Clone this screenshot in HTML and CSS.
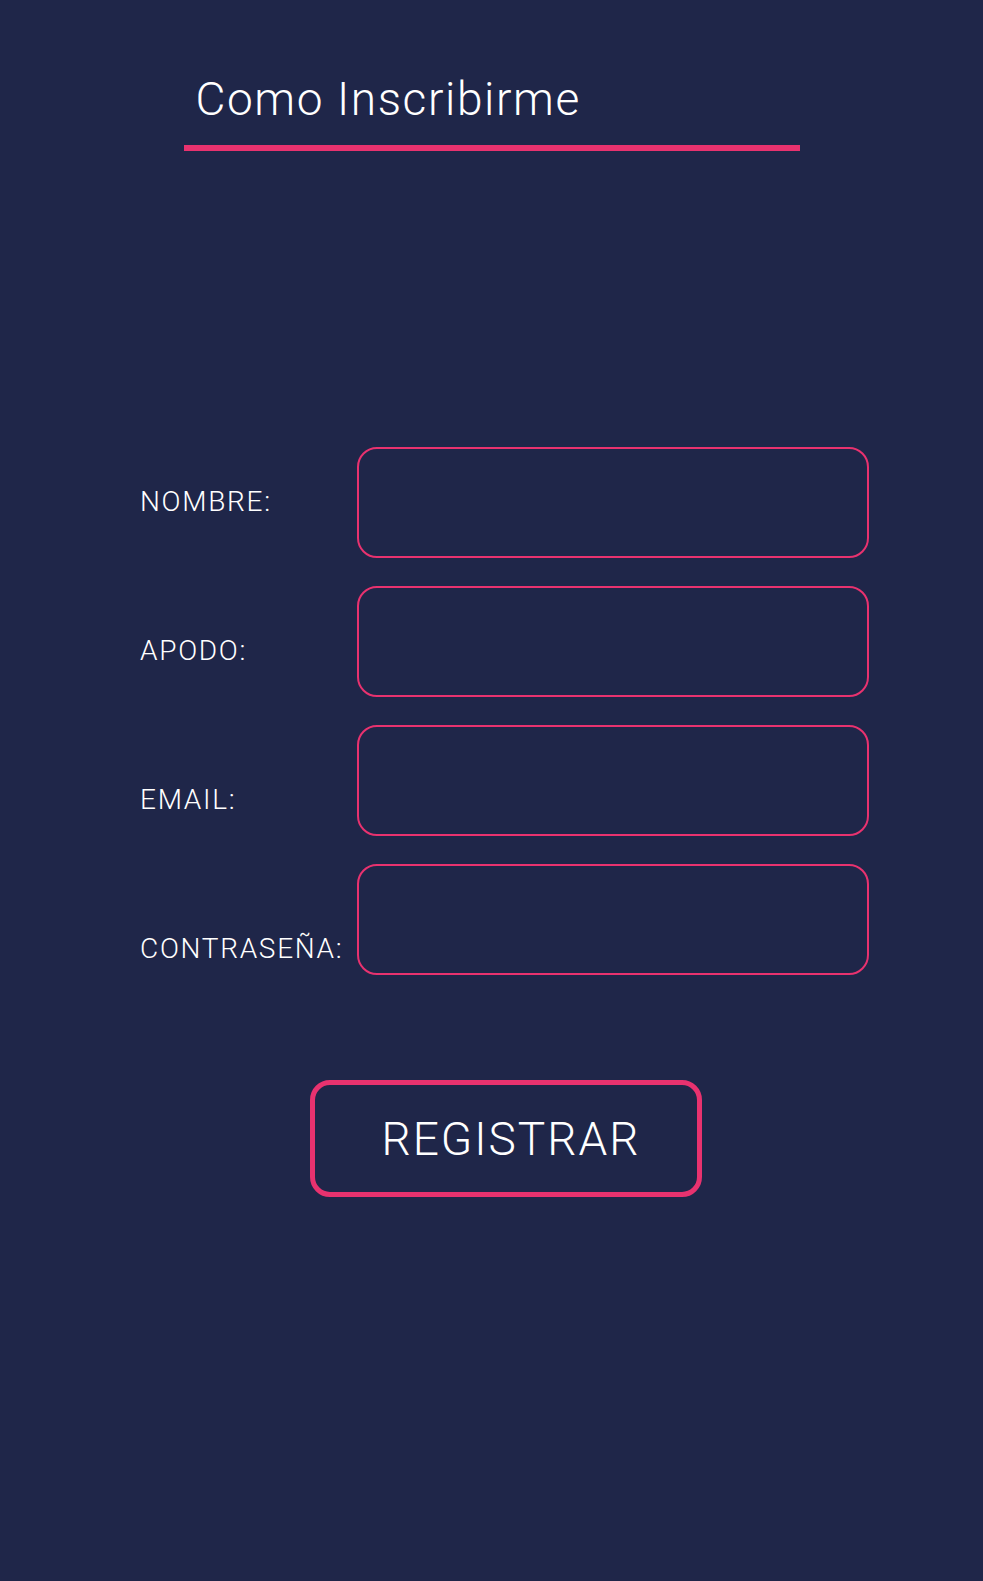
FILE: index.html
```html
<!DOCTYPE html>
<html lang="es">
<head>
    <meta charset="UTF-8">
    <meta name="viewport" content="width=device-width, initial-scale=1.0">
    <title>Como Inscribirme</title>
    <link rel="stylesheet" href="styles.css">
</head>
<body>
    <div id="header">
        <div id="title">Como Inscribirme</div>
    </div>
    <form id="registro" action="#" method="get">
        <div id="campos">
            <div class="etiquetas">
                <label for="nombre">NOMBRE:</label>
                <label for="apodo">APODO:</label>
                <label for="email">EMAIL:</label>
                <label for="pass">CONTRASEÑA:</label>
            </div>
            <div class="entradas">
                <input type="text" id="nombre" name="nombre">
                <input type="text" id="apodo" name="apodo">
                <input type="email" id="email" name="email">
                <input type="password" id="pass" name="pass">
            </div>
        </div>
        <div id="acciones">
            <button type="submit">REGISTRAR</button>
        </div>
    </form>
</body>
</html>
```

FILE: styles.css
```css
body {
    font-family: Roboto, "Liberation Sans", sans-serif;
    font-weight: 300;
    margin: 0;
    padding: 0;
    background-color: #1f2649;
    color: white;
    min-height: 1581px;
}
#header {
    display: flex;
    justify-content: center;
    padding-top: 76px;
}
#title {
    width: 604px;
    padding: 0 0 23px 12px;
    font-size: 46px;
    line-height: 46px;
    letter-spacing: 1.6px;
    border-bottom: 6px solid #e8326f;
}
#registro {
    padding-top: 275px;
    padding-left: 140px;
    width: 729px;
}
#campos {
    display: flex;
}
.etiquetas {
    display: flex;
    flex-direction: column;
    width: 217px;
    padding-top: 1px;
}
.etiquetas label {
    height: 149px;
    display: flex;
    align-items: center;
    font-size: 28px;
    letter-spacing: 1.7px;
}
.entradas {
    display: flex;
    flex-direction: column;
    gap: 28px;
    padding-top: 21px;
}
input {
    box-sizing: border-box;
    width: 512px;
    height: 111px;
    border: 2px solid #e8326f;
    border-radius: 20px;
    background-color: transparent;
    color: white;
    font-size: 24px;
    padding: 0 20px;
    outline: none;
}
#acciones {
    display: flex;
    justify-content: center;
    margin-top: 57px;
    padding-left: 3px;
}
button {
    box-sizing: border-box;
    width: 392px;
    height: 117px;
    border: 5px solid #e8326f;
    border-radius: 20px;
    background-color: transparent;
    color: white;
    font-family: Roboto, "Liberation Sans", sans-serif;
    font-weight: 300;
    font-size: 46px;
    letter-spacing: 2px;
    padding: 0 0 0 10px;
    cursor: pointer;
}
```
